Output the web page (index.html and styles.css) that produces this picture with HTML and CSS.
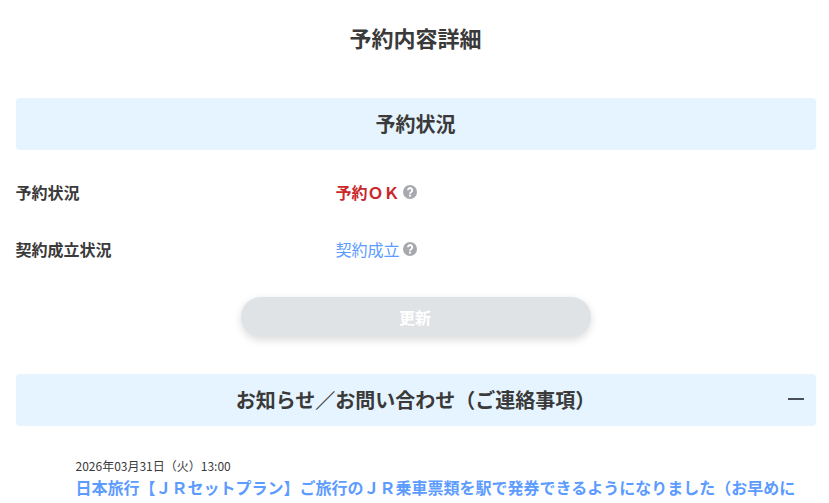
FILE: index.html
```html
<!DOCTYPE html>
<html lang="ja">
<head>
<meta charset="utf-8">
<title>予約内容詳細</title>
<link rel="stylesheet" href="styles.css">
</head>
<body>
<main class="page">
  <h1 class="title">予約内容詳細</h1>
  <h2 class="band">予約状況</h2>
  <dl class="rows">
    <div class="row">
      <dt class="label">予約状況</dt>
      <dd class="value status-ok">予約ＯＫ<svg class="help" viewBox="0 0 14 14" aria-hidden="true"><circle cx="7" cy="7" r="7"/><path class="help-mark" d="M4.9 5.3a2.15 2.15 0 1 1 3.4 1.7c-.8.5-1.3 1-1.3 1.7"/><circle class="help-dot" cx="7" cy="10.7" r="1.1"/></svg></dd>
    </div>
    <div class="row">
      <dt class="label">契約成立状況</dt>
      <dd class="value status-link">契約成立<svg class="help" viewBox="0 0 14 14" aria-hidden="true"><circle cx="7" cy="7" r="7"/><path class="help-mark" d="M4.9 5.3a2.15 2.15 0 1 1 3.4 1.7c-.8.5-1.3 1-1.3 1.7"/><circle class="help-dot" cx="7" cy="10.7" r="1.1"/></svg></dd>
    </div>
  </dl>
  <div class="actions"><button class="update" type="button">更新</button></div>
  <h2 class="band band-toggle">お知らせ／お問い合わせ（ご連絡事項）<span class="minus"></span></h2>
  <section class="news">
    <p class="date">2026年03月31日（火）13:00</p>
    <a class="news-link">日本旅行【ＪＲセットプラン】ご旅行のＪＲ乗車票類を駅で発券できるようになりました（お早めに</a>
  </section>
</main>
</body>
</html>
```
FILE: styles.css
```css
* { box-sizing: border-box; }
html, body { margin: 0; padding: 0; height: 503px; overflow: hidden; background: #fff; }
body { font-family: "Noto Sans CJK JP", "Noto Sans", sans-serif; color: #3a3a3a; }
.page { padding: 0 13px 0 16px; }
.title { margin: 0; padding: 21px 1px 0 0; height: 98px; font-size: 22px; line-height: 33px; font-weight: 700; text-align: center; }
.band { position: relative; margin: 0; padding-right: 1px; height: 52px; line-height: 52px; background: #e6f4ff; border-radius: 4px; font-size: 20px; font-weight: 700; text-align: center; }
.rows { margin: 0; padding-top: 13px; }
.row { display: flex; height: 57px; align-items: center; }
.label { width: 320px; margin-left: -0.4px; font-size: 16px; font-weight: 700; }
.value { margin: 0; font-size: 16px; display: flex; align-items: center; }
.status-ok { color: #c9282d; font-weight: 700; }
.status-link { color: #5c9bff; }
.help { flex: none; width: 14px; height: 14px; margin: 0 0 0 3px; }
.help > circle:first-child { fill: #a6a9ad; }
.help-mark { fill: none; stroke: #fff; stroke-width: 1.9; }
.help-dot { fill: #fff; }
.actions { display: flex; justify-content: center; padding-top: 20px; height: 97px; }
.update { width: 350px; height: 40px; border: 0; border-radius: 20px; padding: 0 2px 0 0; background: #e0e3e6; color: #fff; font: 700 16px "Noto Sans CJK JP", sans-serif; box-shadow: 0 3px 8px rgba(0,0,0,.14); }
.minus { position: absolute; right: 12px; top: 24px; width: 16px; height: 2px; background: #4a4f57; }
.news { padding: 31px 0 0 59.5px; }
.date { margin: 0; font-size: 12px; line-height: 18px; }
.news-link { display: block; font-size: 16px; line-height: 24px; font-weight: 700; color: #5c9bff; white-space: nowrap; }
```
